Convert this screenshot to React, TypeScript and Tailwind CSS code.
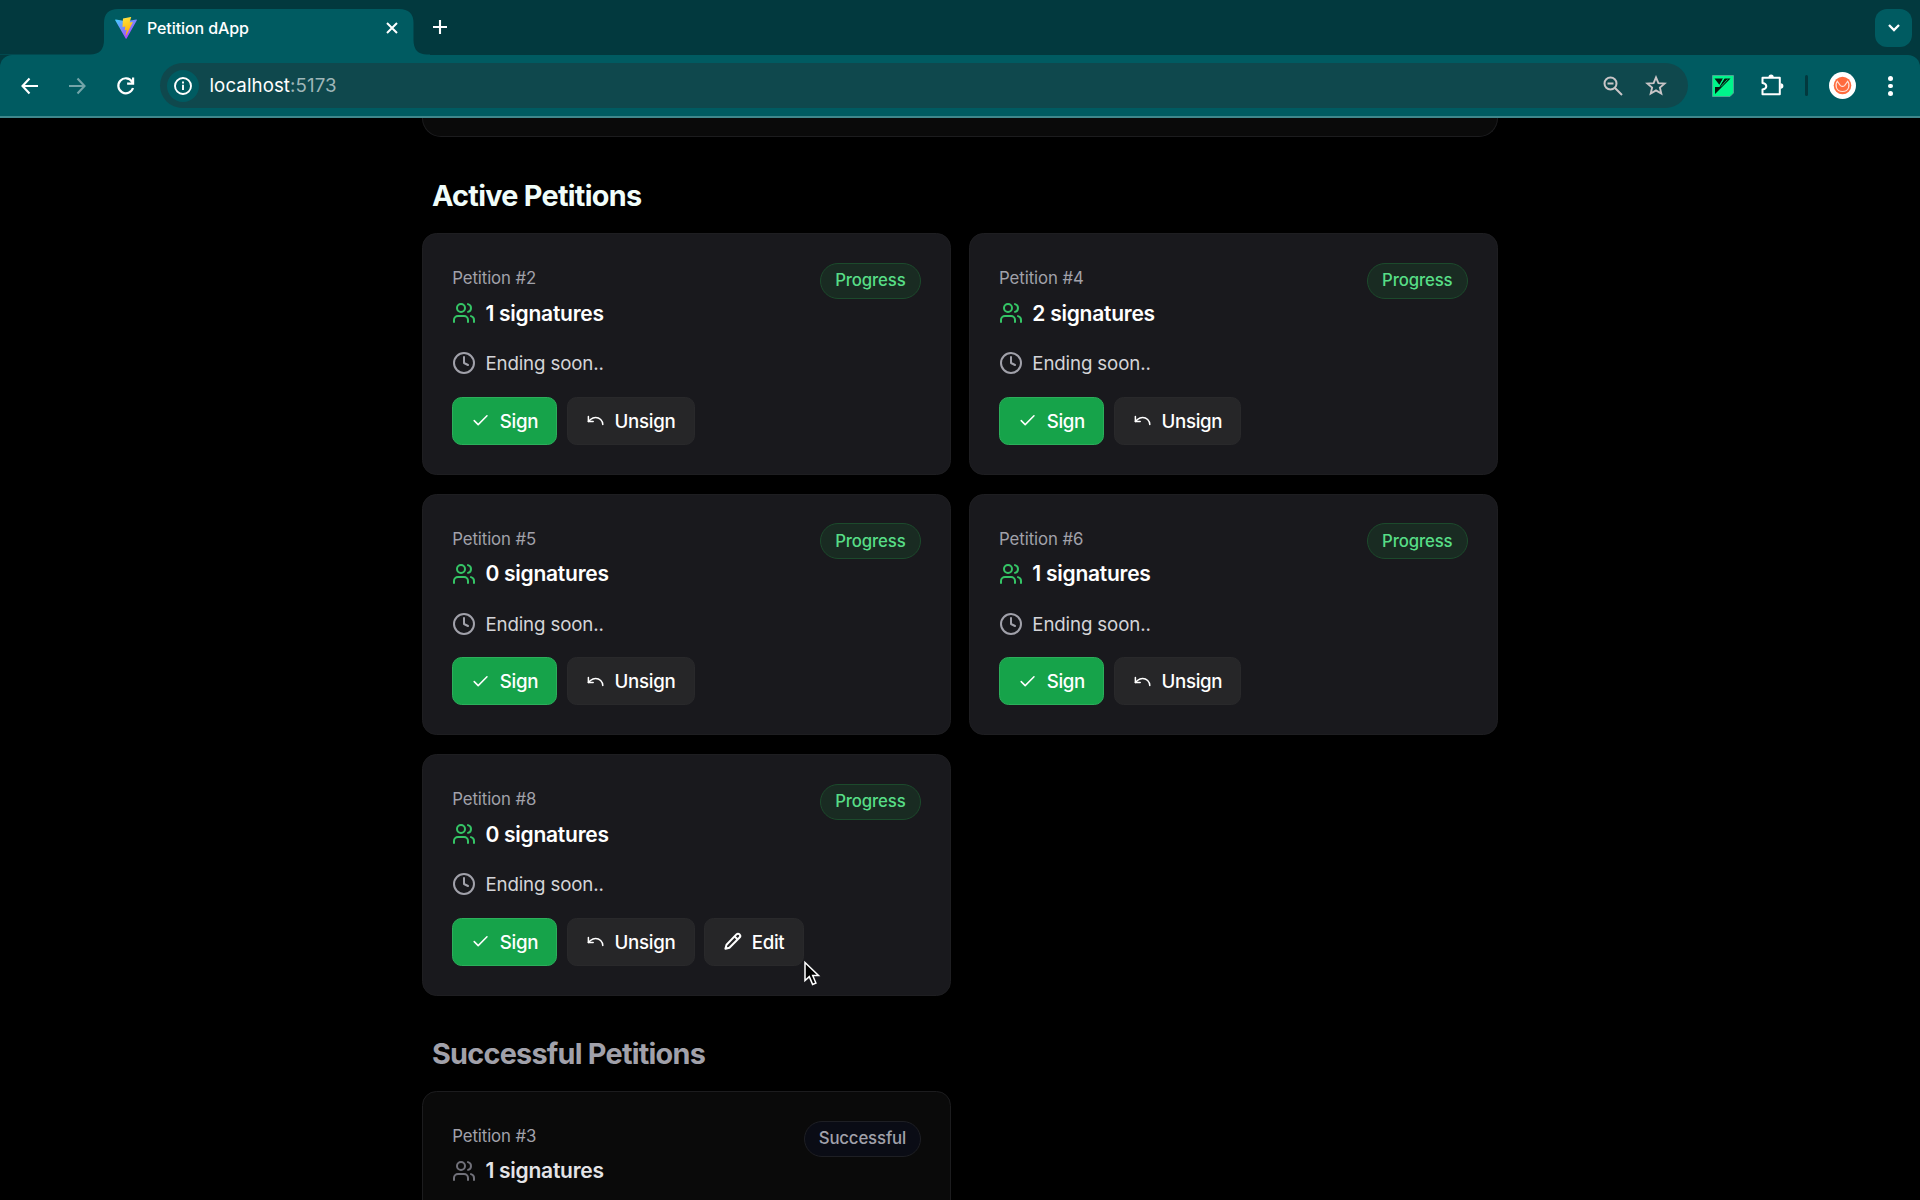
import React from "react";
import { Users, Clock, Check, Undo } from "lucide-react";

function TabStrip() {
  return (
    <div className="relative flex h-[55px] shrink-0 items-start bg-[#02393e]">
      <svg className="absolute left-0 top-[9px]" width="430" height="46" viewBox="0 0 430 46" fill="#005b61">
        <path d="M0 46H430V45.500H427Q413.500 45.500 413.500 31V14Q413.500 0 399 0H118Q104 0 104 14V31Q104 45.500 90 45.500H0Z" />
      </svg>
      <div className="relative ml-[115px] mt-[17px] flex h-[22px] w-[284px] items-center">
        <svg width="22" height="22" viewBox="0 0 32 32">
          <defs>
            <linearGradient id="va" x1="0" y1="0" x2="0.7" y2="1">
              <stop offset="0" stopColor="#41d1ff" />
              <stop offset="1" stopColor="#bd34fe" />
            </linearGradient>
            <linearGradient id="vb" x1="0.4" y1="0" x2="0.6" y2="1">
              <stop offset="0" stopColor="#ffea83" />
              <stop offset="0.1" stopColor="#ffdd35" />
              <stop offset="1" stopColor="#ffa800" />
            </linearGradient>
          </defs>
          <path fill="url(#va)" d="M31.800 4.800 16.900 31.400a.8.8 0 0 1-1.400 0L.300 4.800a.8.8 0 0 1 .9-1.200l15 2.700h.3l14.600-2.700a.8.8 0 0 1 .7 1.200Z" />
          <path fill="url(#vb)" d="m22.900.1-11 2.100a.4.4 0 0 0-.3.400l-.7 11.500a.4.4 0 0 0 .5.400l3.100-.7c.3-.1.5.2.5.5l-.9 4.500c-.1.300.2.600.5.500l1.900-.6c.3-.1.6.2.5.5l-1.500 7c-.1.500.5.700.8.300l9.400-18.600c.2-.3-.1-.7-.5-.6l-3.200.6c-.3.100-.6-.2-.5-.5l2.100-7.400c.1-.3-.2-.6-.7-.5Z" />
        </svg>
        <span className="ml-[10px] text-[16px] font-medium tracking-[-0.1px] text-white">Petition dApp</span>
        <svg className="ml-auto" width="14" height="14" viewBox="0 0 14 14" stroke="#fff" strokeWidth="2">
          <path d="M2 2l10 10M12 2 2 12" />
        </svg>
      </div>
      <svg className="relative ml-[33px] mt-[19px]" width="16" height="16" viewBox="0 0 16 16" stroke="#fff" strokeWidth="2.100">
        <path d="M8 1v14M1 8h14" />
      </svg>
      <div className="ml-auto mr-2 mt-[9px] flex h-[38px] w-[37px] items-center justify-center rounded-[12px] bg-[#005b61]">
        <svg width="14" height="10" viewBox="0 0 14 10" fill="none" stroke="#fff" strokeWidth="2.300">
          <path d="M2 2l5 5 5-5" />
        </svg>
      </div>
    </div>
  );
}

function Toolbar() {
  return (
    <div className="shrink-0 bg-[#02393e]">
      <div className="flex h-[62.500px] items-center rounded-t-[12px] bg-[#005b61] pb-[1px]">
        <svg className="ml-[20px]" width="19" height="18" viewBox="0 0 19 18" fill="none" stroke="#fff" strokeWidth="2.100">
          <path d="M18 9H3M9.500 1.500 2.500 9l7 7.500" />
        </svg>
        <svg className="ml-[29px]" width="19" height="18" viewBox="0 0 19 18" fill="none" stroke="#73a5a9" strokeWidth="2.100">
          <path d="M1 9h15M9.500 1.500l7 7.500-7 7.500" />
        </svg>
        <svg className="ml-[29px]" width="20" height="20" viewBox="0 0 20 20" fill="none" stroke="#fff" strokeWidth="2.200">
          <path d="M17 12A7.500 7.500 0 1 1 16 5.500L17.500 7.300M17.100 1.500v6.200h-6" />
        </svg>
        <div className="ml-[24px] flex h-[45px] w-[1528px] items-center rounded-full bg-[#0f484d] pl-[6.500px]">
          <div className="flex size-8 items-center justify-center rounded-full bg-[#005b61]">
            <svg width="18" height="18" viewBox="0 0 18 18" fill="none" stroke="#fff" strokeWidth="1.900">
              <circle cx="9" cy="9" r="8" />
              <path d="M9 7.800V13M9 4.500v2" />
            </svg>
          </div>
          <span className="ml-[11px] mt-px text-[18.700px] tracking-[0.080px] text-white">
            localhost<span className="text-[#9fb6b8]">:5173</span>
          </span>
          <svg className="ml-auto" width="20" height="20" viewBox="0 0 20 20" fill="none" stroke="#c9c5c7" strokeWidth="2">
            <circle cx="7.500" cy="7.500" r="6" />
            <path d="M12 12l7 7M4.500 7.500h6" />
          </svg>
          <svg className="ml-[22px] mr-[21px]" width="22" height="21" viewBox="0 0 22 21" fill="none" stroke="#c9c5c7" strokeWidth="1.900">
            <path d="M11 2.400l2.400 5.700 6.200.5-4.700 4 1.400 6-5.300-3.200-5.300 3.200 1.400-6-4.700-4 6.200-.5z" />
          </svg>
        </div>
        <svg className="ml-[24px]" width="22" height="22" viewBox="0 0 22 22">
          <path d="M.5.500h21v17.500l-3.500 3.500H.5z" fill="#00f58b" stroke="#5aa79b" strokeWidth="0.800" />
          <path d="M2.500 3.500H11L7.500 10zM12.500 3.500H18.500L3 19V12H7z" fill="#04170f" />
          <path d="M15.500 4.500L9 11.500" stroke="#00f58b" strokeWidth="0.800" />
          <path d="M12 3L7 11.500H2" stroke="#00f58b" strokeWidth="1.100" fill="none" />
        </svg>
        <svg className="mb-px ml-[26px]" width="24" height="24" viewBox="0 0 24 24" fill="none" stroke="#fff" strokeWidth="2">
          <path d="M2.500 4.800H19.800V21.300H2.500V16.500q3.800-.6 3.800-3.200t-3.800-3.200z" strokeLinejoin="round" />
          <path d="M8.500 4.200a2.600 2.800 0 0 1 5.200 0zM20.500 10.300a2.900 2.800 0 0 1 0 5.600z" fill="#fff" stroke="none" />
        </svg>
        <div className="ml-[21px] h-[21px] w-[3px] rounded-full bg-[#02393e]" />
        <svg className="ml-[21px]" width="27" height="27" viewBox="0 0 27 27">
          <circle cx="13.500" cy="13.500" r="13.500" fill="#fff" />
          <circle cx="13.500" cy="13.500" r="8.800" fill="#ff6b3d" />
          <path d="M8.300 9.300C6 12.500 6.500 19.500 13.500 19.500S21 12.500 18.700 9.300L15.800 13.300Q13.500 15.500 11.200 13.300z" fill="none" stroke="#ffe3da" strokeWidth="1.100" />
        </svg>
        <div className="ml-[32px] flex flex-col gap-[3px]">
          <div className="size-[4.500px] rounded-full bg-white" />
          <div className="size-[4.500px] rounded-full bg-white" />
          <div className="size-[4.500px] rounded-full bg-white" />
        </div>
      </div>
    </div>
  );
}

interface PetitionProps {
  id: number;
  signatures: number;
  editable?: boolean;
  done?: boolean;
}

const secondary =
  "flex h-12 items-center gap-[9.200px] rounded-[9.6px] border border-[#29292b] bg-[#262628] px-[18.200px] text-[18.700px] font-medium tracking-[-0.3px] text-white";

function PencilIcon() {
  return (
    <svg width="19.200" height="19.200" viewBox="0 0 24 24" fill="none" stroke="currentColor" strokeWidth="2.500" strokeLinejoin="round">
      <path d="M16.800 3a2.600 2.600 0 0 1 3.900 3.900L8 19.600l-5 1.400 1.400-5.100Z" />
      <path d="M14.500 5.500l3.900 3.900" />
    </svg>
  );
}

function PetitionCard({ id, signatures, editable, done }: PetitionProps) {
  return (
    <div
      className={
        done
          ? "h-[242px] rounded-[14.4px] border border-[#1c1c1e] bg-[#0a0a0a] p-[28.8px]"
          : "h-[241.6px] rounded-[14.4px] border border-[#1e1e21] bg-[#19191d] p-[28.8px]"
      }
    >
      <div className="flex items-start justify-between">
        <div>
          <p className="mt-[1.500px] text-[16.800px] leading-[28px] text-[#a1a1aa]">
            <span className="tracking-[-0.100px]">Petition #{id}</span>
          </p>
          <div className="mt-[6.500px] flex h-[29px] items-center gap-[9.200px]">
            <Users size={24} strokeWidth={2} className={done ? "text-[#71717a]" : "text-[#35c566]"} />
            <span
              className={
                done
                  ? "text-[21px] font-semibold tracking-[-0.25px] text-[#e4e4e7]"
                  : "text-[21px] font-semibold tracking-[-0.25px] text-white"
              }
            >
              {signatures} signatures
            </span>
          </div>
        </div>
        <span
          className={
            done
              ? "flex h-[36px] w-[117px] items-center justify-center rounded-full border border-[#1e1f24] bg-[#0a0c15] text-[16.800px] font-medium tracking-[-0.15px] text-[#a1a1aa]"
              : "flex h-[36px] w-[101px] items-center justify-center rounded-full border border-[#1c4a2c] bg-[#192b22] text-[16.800px] font-medium tracking-[-0.15px] text-[#57dd86]"
          }
        >
          {done ? "Successful" : "Progress"}
        </span>
      </div>
      <div className="mt-[21px] flex h-[29px] items-center gap-[9.200px]">
        <Clock size={24} strokeWidth={2} className="text-[#a1a1aa]" />
        <span className="pt-[2px] text-[18.700px] tracking-[-0.13px] text-[#d4d4d8]">Ending soon..</span>
      </div>
      <div className="mt-[19px] flex gap-[9.6px]">
        <button className="flex h-12 items-center gap-[9.200px] rounded-[9.6px] border border-[#2caf5b] bg-[#16a34a] px-[18.200px] text-[18.700px] font-medium tracking-[-0.3px] text-white">
          <Check size={19.2} strokeWidth={1.900} />
          <span className="pt-[2px]">Sign</span>
        </button>
        <button className={secondary}>
          <Undo size={19.2} strokeWidth={1.900} />
          <span className="pt-[2px]">Unsign</span>
        </button>
        {editable && (
          <button className={secondary}>
            <PencilIcon />
            <span className="pt-[2px]">Edit</span>
          </button>
        )}
      </div>
    </div>
  );
}

const active: PetitionProps[] = [
  { id: 2, signatures: 1 },
  { id: 4, signatures: 2 },
  { id: 5, signatures: 0 },
  { id: 6, signatures: 1 },
  { id: 8, signatures: 0, editable: true },
];

export default function App() {
  return (
    <div className="relative flex h-[1200px] w-[1920px] flex-col overflow-hidden bg-black font-['Inter',sans-serif]">
      <TabStrip />
      <Toolbar />
      <div className="-mt-[1.500px] h-[1.500px] shrink-0 bg-[#3f878c]" />
      <main className="mx-auto w-[1075.2px] shrink-0">
        <div className="h-[19px] rounded-b-[19px] border border-t-0 border-[#1c1c1e] bg-[#0a0a0a]" />
        <h2 className="mt-[40px] h-[56px] pl-[9.6px] text-[28.800px] font-bold leading-[38px] tracking-[-0.72px] text-[#f0fdfa]">
          Active Petitions
        </h2>
        <div className="grid grid-cols-2 gap-x-[18.600px] gap-y-[19px] pt-[0.500px]">
          {active.map((p) => (
            <PetitionCard key={p.id} {...p} />
          ))}
        </div>
        <h2 className="mt-[39px] h-[56px] pl-[9.6px] text-[28.800px] font-bold leading-[38px] tracking-[-0.75px] text-[#a1a1aa]">
          Successful Petitions
        </h2>
        <div className="grid grid-cols-2 gap-[18.600px]">
          <PetitionCard id={3} signatures={1} done />
        </div>
      </main>
      <svg className="absolute left-[803px] top-[960px]" width="18" height="27" viewBox="0 0 18 27">
        <path d="M2 2.500V20.500l4.300-3.900 3.300 7.800 3.300-1.400-3.200-7.500h5.800z" fill="#000" stroke="#fff" strokeWidth="1.500" />
      </svg>
    </div>
  );
}
